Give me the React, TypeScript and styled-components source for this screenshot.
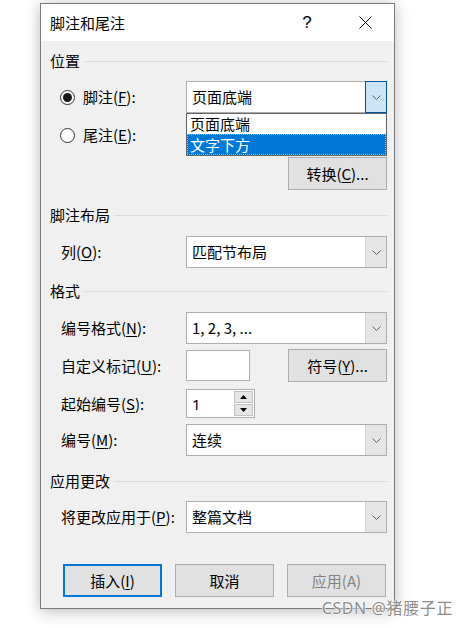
import React from 'react';
import styled, { createGlobalStyle } from 'styled-components';

const GlobalStyle = createGlobalStyle`
  html, body {
    margin: 0;
    padding: 0;
    background: #ffffff;
  }
  body {
    font-family: "Noto Sans CJK SC", "Noto Sans", sans-serif;
    font-size: 15px;
    color: #000;
  }
`;

const Page = styled.div`
  position: relative;
  width: 467px;
  height: 628px;
  overflow: hidden;
  background: #ffffff;
`;

const Dialog = styled.div`
  position: relative;
  margin: 3px 0 0 40px;
  width: 355px;
  height: 606px;
  box-sizing: border-box;
  border: 1px solid #7a7a7a;
  background: #f0f0f0;
  box-shadow: 0 2px 14px rgba(0, 0, 0, 0.28);
  display: flex;
  flex-direction: column;
`;

const TitleBar = styled.div`
  height: 37px;
  background: #ffffff;
  display: flex;
  align-items: center;
  padding-left: 9px;
`;

const Title = styled.div`
  flex: 1;
  font-size: 15px;
  line-height: 20px;
`;

const TitleButton = styled.div`
  width: 58px;
  height: 37px;
  display: flex;
  align-items: center;
  justify-content: center;
  font-family: "Liberation Sans", sans-serif;
  font-size: 17px;
  color: #000;
`;

const Body = styled.div`
  position: relative;
  flex: 1;
  display: flex;
  flex-direction: column;
  padding: 0 7px 0 9px;
`;

const SectionHeader = styled.div<{ $mt: number }>`
  margin-top: ${(p) => p.$mt}px;
  height: 20px;
  display: flex;
  align-items: center;
  gap: 5px;
  line-height: 20px;
  &::after {
    content: '';
    flex: 1;
    height: 1px;
    background: #dadada;
  }
`;

const Row = styled.div<{ $mt: number; $h: number }>`
  margin-top: ${(p) => p.$mt}px;
  height: ${(p) => p.$h}px;
  display: grid;
  grid-template-columns: 136px 1fr;
  align-items: center;
`;

const Label = styled.div`
  padding-left: 11px;
  line-height: 20px;
  white-space: nowrap;
`;

const RadioLabel = styled.label`
  display: flex;
  align-items: center;
  gap: 8px;
  padding-left: 10px;
  line-height: 20px;
  white-space: nowrap;
`;

const RadioCircle = styled.span<{ $checked?: boolean }>`
  width: 15px;
  height: 15px;
  box-sizing: border-box;
  border: 1px solid #333333;
  border-radius: 50%;
  background: #ffffff;
  display: flex;
  align-items: center;
  justify-content: center;
  &::after {
    content: '';
    width: 9px;
    height: 9px;
    border-radius: 50%;
    background: ${(p) => (p.$checked ? '#1a1a1a' : 'transparent')};
  }
`;

const Key = styled.u`
  text-decoration-thickness: 1px;
  text-underline-offset: 2px;
`;

const ComboBox = styled.div`
  position: relative;
  height: 32px;
  box-sizing: border-box;
  border: 1px solid #adadad;
  background: #ffffff;
  display: flex;
  align-items: stretch;
`;

const ComboText = styled.div`
  flex: 1;
  padding-left: 5px;
  display: flex;
  align-items: center;
  line-height: 20px;
`;

const ComboArrow = styled.div<{ $open?: boolean }>`
  box-sizing: border-box;
  background: ${(p) => (p.$open ? '#cce4f7' : '#e5e5e5')};
  border: ${(p) => (p.$open ? '1px solid #005499' : 'none')};
  border-left: 1px solid ${(p) => (p.$open ? '#005499' : '#d4d4d4')};
  margin: ${(p) => (p.$open ? '-1px -1px -1px 0' : '0')};
  width: ${(p) => (p.$open ? '22px' : '21px')};
  display: flex;
  align-items: center;
  justify-content: center;
`;

const DropList = styled.div`
  position: absolute;
  left: -1px;
  right: -1px;
  top: 31px;
  z-index: 5;
  border: 1px solid #646464;
  background: #ffffff;
`;

const DropItem = styled.div<{ $selected?: boolean }>`
  height: ${(p) => (p.$selected ? '21px' : '20px')};
  box-sizing: border-box;
  padding-left: 2px;
  display: flex;
  align-items: center;
  line-height: 20px;
  background: ${(p) => (p.$selected ? '#0078d7' : '#ffffff')};
  color: ${(p) => (p.$selected ? '#ffffff' : '#000000')};
  border: 1px dotted ${(p) => (p.$selected ? '#e8a35c' : 'transparent')};
`;

const Button = styled.div<{ $default?: boolean; $disabled?: boolean }>`
  width: 99px;
  height: 33px;
  box-sizing: border-box;
  border: ${(p) => (p.$default ? '2px solid #0078d7' : '1px solid #adadad')};
  background: #e1e1e1;
  color: ${(p) => (p.$disabled ? '#838383' : '#000000')};
  display: flex;
  align-items: center;
  justify-content: center;
  line-height: 20px;
  white-space: nowrap;
`;

const ControlLine = styled.div`
  display: flex;
  align-items: center;
  justify-content: space-between;
`;

const TextInput = styled.div<{ $w: number; $h: number }>`
  width: ${(p) => p.$w}px;
  height: ${(p) => p.$h}px;
  box-sizing: border-box;
  border: 1px solid #adadad;
  background: #ffffff;
  display: flex;
  align-items: center;
`;

const SpinValue = styled.div`
  flex: 1;
  padding-left: 5px;
  font-family: "Noto Sans", sans-serif;
  line-height: 20px;
`;

const SpinButtons = styled.div`
  width: 20px;
  height: 100%;
  display: flex;
  flex-direction: column;
  padding: 1px 1px 1px 0;
  box-sizing: border-box;
  gap: 1px;
`;

const SpinButton = styled.div`
  flex: 1;
  box-sizing: border-box;
  border: 1px solid #c2c2c2;
  background: #e5e5e5;
  display: flex;
  align-items: center;
  justify-content: center;
`;

const ButtonRow = styled.div`
  margin-top: 31px;
  padding-left: 13px;
  display: flex;
  gap: 13px;
`;

const Watermark = styled.div`
  position: absolute;
  right: 14px;
  top: 597px;
  font-family: "Noto Sans", "Noto Sans CJK SC", sans-serif;
  font-size: 16px;
  letter-spacing: 0.6px;
  line-height: 22px;
  color: #8c8c8c;
  text-shadow: 0 0 2px #ffffff, 0 0 2px #ffffff, 0 0 1px #ffffff;
  z-index: 10;
`;

const Chevron = () => (
  <svg width="9" height="5" viewBox="0 0 9 5">
    <path d="M0.5 0.5 L4.5 4.5 L8.5 0.5" fill="none" stroke="#606060" strokeWidth="1" />
  </svg>
);

const Tri = ({ up }: { up?: boolean }) => (
  <svg width="7" height="4" viewBox="0 0 7 4">
    <path d={up ? 'M0 4 L3.5 0 L7 4 Z' : 'M0 0 L3.5 4 L7 0 Z'} fill="#000" />
  </svg>
);

const CloseIcon = () => (
  <svg width="13" height="13" viewBox="0 0 13 13">
    <path d="M0.5 0.5 L12.5 12.5 M12.5 0.5 L0.5 12.5" stroke="#000" strokeWidth="1" />
  </svg>
);

const Combo: React.FC<{ value: string; open?: boolean; children?: React.ReactNode }> = ({ value, open, children }) => (
  <ComboBox>
    <ComboText>{value}</ComboText>
    <ComboArrow $open={open}>
      <Chevron />
    </ComboArrow>
    {children}
  </ComboBox>
);

export default function App() {
  return (
    <Page>
      <GlobalStyle />
      <Dialog>
        <TitleBar>
          <Title>脚注和尾注</Title>
          <TitleButton>?</TitleButton>
          <TitleButton>
            <CloseIcon />
          </TitleButton>
        </TitleBar>
        <Body>
          <SectionHeader $mt={10}>位置</SectionHeader>
          <Row $mt={10} $h={32}>
            <RadioLabel>
              <RadioCircle $checked />
              <span>
                脚注(<Key>F</Key>):
              </span>
            </RadioLabel>
            <Combo value="页面底端" open>
              <DropList>
                <DropItem>页面底端</DropItem>
                <DropItem $selected>文字下方</DropItem>
              </DropList>
            </Combo>
          </Row>
          <Row $mt={0} $h={44}>
            <RadioLabel>
              <RadioCircle />
              <span>
                尾注(<Key>E</Key>):
              </span>
            </RadioLabel>
            <div />
          </Row>
          <Row $mt={0} $h={33}>
            <div />
            <ControlLine>
              <div />
              <Button>
                转换(<Key>C</Key>)...
              </Button>
            </ControlLine>
          </Row>

          <SectionHeader $mt={15}>脚注布局</SectionHeader>
          <Row $mt={11} $h={32}>
            <Label>
              列(<Key>O</Key>):
            </Label>
            <Combo value="匹配节布局" />
          </Row>

          <SectionHeader $mt={13}>格式</SectionHeader>
          <Row $mt={11} $h={32}>
            <Label>
              编号格式(<Key>N</Key>):
            </Label>
            <Combo value="1, 2, 3, ..." />
          </Row>
          <Row $mt={5} $h={33}>
            <Label>
              自定义标记(<Key>U</Key>):
            </Label>
            <ControlLine>
              <TextInput $w={64} $h={31} />
              <Button>
                符号(<Key>Y</Key>)...
              </Button>
            </ControlLine>
          </Row>
          <Row $mt={7} $h={29}>
            <Label>
              起始编号(<Key>S</Key>):
            </Label>
            <ControlLine>
              <TextInput $w={69} $h={29}>
                <SpinValue>1</SpinValue>
                <SpinButtons>
                  <SpinButton>
                    <Tri up />
                  </SpinButton>
                  <SpinButton>
                    <Tri />
                  </SpinButton>
                </SpinButtons>
              </TextInput>
            </ControlLine>
          </Row>
          <Row $mt={6} $h={32}>
            <Label>
              编号(<Key>M</Key>):
            </Label>
            <Combo value="连续" />
          </Row>

          <SectionHeader $mt={15}>应用更改</SectionHeader>
          <Row $mt={10} $h={32}>
            <Label>
              将更改应用于(<Key>P</Key>):
            </Label>
            <Combo value="整篇文档" />
          </Row>

          <ButtonRow>
            <Button $default>
              插入(<Key>I</Key>)
            </Button>
            <Button>取消</Button>
            <Button $disabled>应用(A)</Button>
          </ButtonRow>
        </Body>
      </Dialog>
      <Watermark>CSDN @猪腰子正</Watermark>
    </Page>
  );
}
